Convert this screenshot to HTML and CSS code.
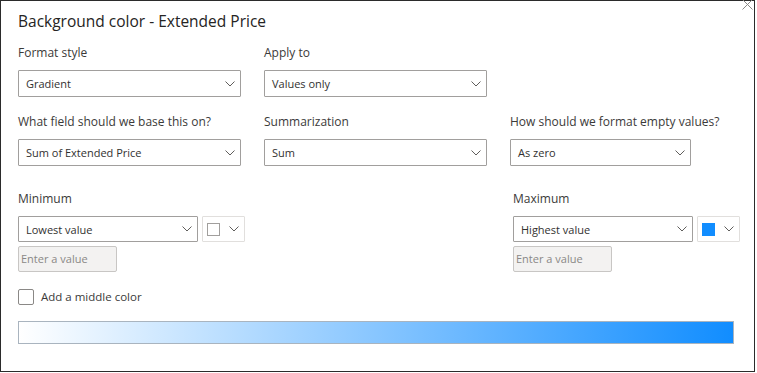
FILE: index.html
```html
<!DOCTYPE html>
<html>
<head>
<meta charset="utf-8">
<link rel="stylesheet" href="styles.css">
</head>
<body>
<div class="dialog">
  <div class="close" aria-label="Close">
    <svg width="11" height="11" viewBox="0 0 11 11"><path d="M0.5 0.5 L10.5 10.5 M10.5 0.5 L0.5 10.5" stroke="#8a8886" stroke-width="1" fill="none"/></svg>
  </div>
  <div class="title">Background color - Extended Price</div>

  <div class="row row1">
    <div class="field w1">
      <div class="label">Format style</div>
      <div class="select"><span>Gradient</span><svg class="chev" width="10" height="6" viewBox="0 0 10 6"><path d="M0.5 0.5 L5 5 L9.5 0.5" stroke="#605e5c" fill="none"/></svg></div>
    </div>
    <div class="field w2">
      <div class="label">Apply to</div>
      <div class="select"><span>Values only</span><svg class="chev" width="10" height="6" viewBox="0 0 10 6"><path d="M0.5 0.5 L5 5 L9.5 0.5" stroke="#605e5c" fill="none"/></svg></div>
    </div>
  </div>

  <div class="row row2">
    <div class="field w1">
      <div class="label">What field should we base this on?</div>
      <div class="select"><span>Sum of Extended Price</span><svg class="chev" width="10" height="6" viewBox="0 0 10 6"><path d="M0.5 0.5 L5 5 L9.5 0.5" stroke="#605e5c" fill="none"/></svg></div>
    </div>
    <div class="field w2">
      <div class="label">Summarization</div>
      <div class="select"><span>Sum</span><svg class="chev" width="10" height="6" viewBox="0 0 10 6"><path d="M0.5 0.5 L5 5 L9.5 0.5" stroke="#605e5c" fill="none"/></svg></div>
    </div>
    <div class="field w3">
      <div class="label">How should we format empty values?</div>
      <div class="select"><span>As zero</span><svg class="chev" width="10" height="6" viewBox="0 0 10 6"><path d="M0.5 0.5 L5 5 L9.5 0.5" stroke="#605e5c" fill="none"/></svg></div>
    </div>
  </div>

  <div class="row row3">
    <div class="field range">
      <div class="label">Minimum</div>
      <div class="pick">
        <div class="select wmin"><span>Lowest value</span><svg class="chev" width="10" height="6" viewBox="0 0 10 6"><path d="M0.5 0.5 L5 5 L9.5 0.5" stroke="#605e5c" fill="none"/></svg></div>
        <div class="color"><span class="swatch white"></span><svg class="chev" width="10" height="6" viewBox="0 0 10 6"><path d="M0.5 0.5 L5 5 L9.5 0.5" stroke="#605e5c" fill="none"/></svg></div>
      </div>
      <div class="input">Enter a value</div>
    </div>
    <div class="field range">
      <div class="label">Maximum</div>
      <div class="pick">
        <div class="select wmin"><span>Highest value</span><svg class="chev" width="10" height="6" viewBox="0 0 10 6"><path d="M0.5 0.5 L5 5 L9.5 0.5" stroke="#605e5c" fill="none"/></svg></div>
        <div class="color"><span class="swatch blue"></span><svg class="chev" width="10" height="6" viewBox="0 0 10 6"><path d="M0.5 0.5 L5 5 L9.5 0.5" stroke="#605e5c" fill="none"/></svg></div>
      </div>
      <div class="input">Enter a value</div>
    </div>
  </div>

  <div class="check">
    <span class="box"></span>
    <span class="check-label">Add a middle color</span>
  </div>

  <div class="bar"></div>
</div>
</body>
</html>
```

FILE: styles.css
```css
* { box-sizing: border-box; }
html, body { margin: 0; padding: 0; background: #ffffff; }
body {
  font-family: "Open Sans", "Noto Sans", sans-serif;
  color: #323130;
}
.dialog {
  position: relative;
  width: 755px;
  height: 372px;
  border: 1px solid #2b2b2b;
  padding: 0 0 0 17px;
  background: #ffffff;
}
.close {
  position: absolute;
  top: -2px;
  right: 1px;
  width: 11px;
  height: 11px;
  line-height: 0;
}
.title {
  margin-top: 9px;
  height: 22px;
  line-height: 22px;
  font-size: 15.5px;
  color: #252423;
}
.row { display: flex; gap: 23px; }
.row1 { margin-top: 12px; }
.row2 { margin-top: 16px; }
.row3 { margin-top: 24px; justify-content: space-between; width: 722px; }
.field { display: flex; flex-direction: column; }
.w1 { width: 223px; }
.w2 { width: 223px; }
.w3 { width: 181px; }
.label {
  height: 18px;
  line-height: 18px;
  font-size: 12px;
  color: #3b3a39;
  margin-bottom: 8px;
  white-space: nowrap;
}
.select {
  height: 27px;
  border: 1px solid #a19f9d;
  border-radius: 1px;
  display: flex;
  align-items: center;
  justify-content: space-between;
  padding: 0 5px 0 7px;
  font-size: 11px;
  color: #323130;
  background: #fff;
  white-space: nowrap;
}
.chev { display: block; }
.pick { display: flex; gap: 4px; }
.wmin { width: 180px; height: 26px; }
.color {
  width: 43px;
  height: 26px;
  border: 1px solid #e1dfdd;
  border-radius: 1px;
  display: flex;
  align-items: center;
  justify-content: space-between;
  padding: 0 5px 0 4px;
}
.swatch { width: 13px; height: 13px; display: block; }
.swatch.white { background: #fff; border: 1px solid #a19f9d; }
.swatch.blue { background: #118dff; }
.range { width: 227px; }
.input {
  margin-top: 4px;
  width: 99px;
  height: 26px;
  border: 1px solid #c8c6c4;
  border-radius: 2px;
  background: #f3f2f1;
  font-size: 11px;
  color: #8a8886;
  line-height: 24px;
  padding-left: 2px;
  white-space: nowrap;
}
.check {
  margin-top: 16px;
  display: flex;
  align-items: center;
  gap: 7px;
  height: 17px;
}
.box {
  width: 16px;
  height: 16px;
  border: 1px solid #8a8886;
  border-radius: 2px;
  display: block;
}
.check-label { font-size: 11.5px; color: #3b3a39; }
.bar {
  margin-top: 16px;
  width: 716px;
  height: 23px;
  border: 1px solid #a9b4bf;
  background: linear-gradient(to right, #ffffff 0%, #118dff 100%);
}
```
